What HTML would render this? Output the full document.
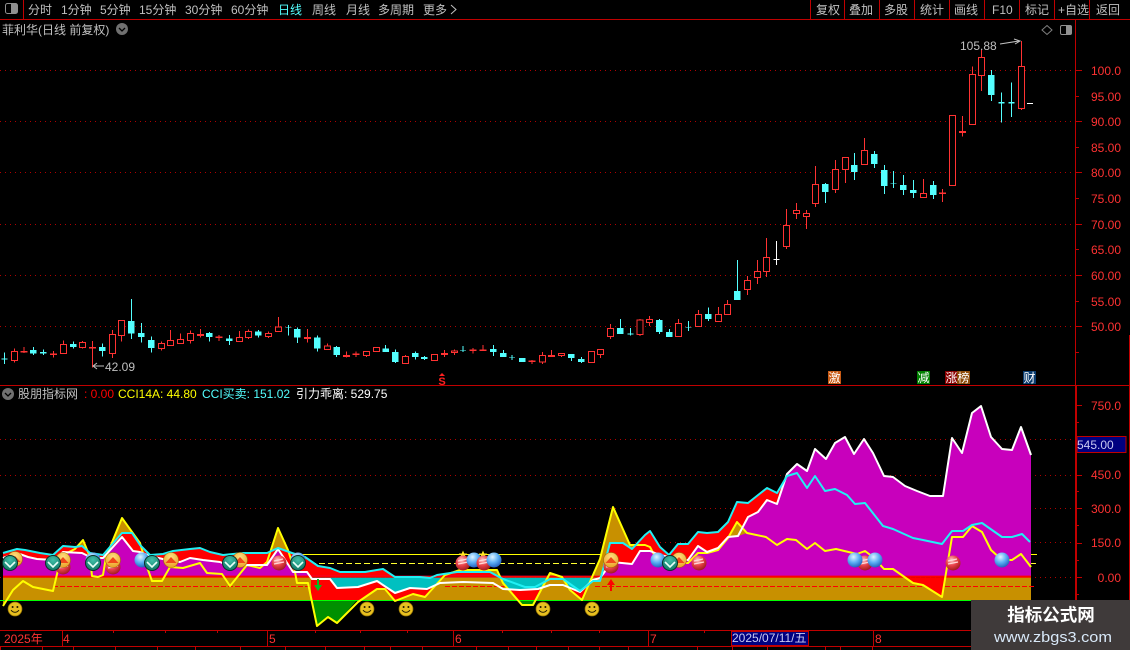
<!DOCTYPE html>
<html><head><meta charset="utf-8"><style>
html,body{margin:0;padding:0;background:#000;width:1130px;height:650px;overflow:hidden}
svg{display:block}
text{font-family:"Liberation Sans","WenQuanYi Zen Hei","Noto Sans CJK SC",sans-serif;font-size:12px}
.g{fill:#c0c0c0}.r{fill:#ff3232}
.z{shape-rendering:crispEdges;stroke-width:3}
.rw{stroke:#ff3232;fill:none}.rb{fill:#000;stroke:#ff3232}
.cw{stroke:#54ffff;fill:none}.cb{fill:#54ffff;stroke:none}
.ww{stroke:#fff;fill:none}
.ln{fill:none;stroke-width:2;stroke-linejoin:round}
.grid{stroke:#b00000;stroke-dasharray:1 4;fill:none}
.bd{stroke:#c00000;fill:none;shape-rendering:crispEdges}
</style></head><body>
<svg xmlns="http://www.w3.org/2000/svg" width="1130" height="650" viewBox="0 0 1130 650">
<defs>
<radialGradient id="gb" cx=".4" cy=".3" r=".75"><stop offset="0" stop-color="#e0f4ff"/><stop offset=".5" stop-color="#5cb0f4"/><stop offset="1" stop-color="#1c58b8"/></radialGradient>
<radialGradient id="gr" cx=".4" cy=".3" r=".75"><stop offset="0" stop-color="#ffc8c8"/><stop offset=".5" stop-color="#e84048"/><stop offset="1" stop-color="#981818"/></radialGradient>
<radialGradient id="gt" cx=".5" cy=".3" r=".8"><stop offset="0" stop-color="#40c0a8"/><stop offset="1" stop-color="#0c6c5c"/></radialGradient>
<radialGradient id="go" cx=".5" cy=".3" r=".8"><stop offset="0" stop-color="#ffe080"/><stop offset="1" stop-color="#e89818"/></radialGradient>
<g id="b"><circle r="7.5" fill="url(#gb)"/></g>
<g id="k"><circle r="7.5" fill="url(#gr)"/><path d="M-5 -2L4 -4M-5 1L5 -1" stroke="#ffd8d8" stroke-width="1.2" fill="none"/></g>
<g id="t"><circle r="7.5" fill="url(#gt)" stroke="#0a3028"/><path d="M-5 -1L0 4L5 -1" stroke="#e8fff8" stroke-width="1.6" fill="none"/></g>
<g id="o"><circle r="7.5" fill="url(#go)" stroke="#a06808" stroke-width=".6"/><path d="M-5.5 3L0 -3L5.5 3Z" fill="#f04818"/></g>
<g id="s"><circle r="7" fill="#e8c020" stroke="#907000" stroke-width=".7"/><circle cx="-2.4" cy="-2" r="1" fill="#201800"/><circle cx="2.4" cy="-2" r="1" fill="#201800"/><path d="M-4 1.2Q0 5.4 4 1.2" stroke="#201800" fill="none"/></g>
<clipPath id="up"><rect x="0" y="380" width="1130" height="195.7"/></clipPath>
<clipPath id="be"><rect x="0" y="577.7" width="1130" height="22.3"/></clipPath>
<clipPath id="lo"><rect x="0" y="577.7" width="1130" height="22.3"/></clipPath>
<clipPath id="dn"><rect x="0" y="600" width="1130" height="40"/></clipPath>
</defs>
<rect width="1130" height="650" fill="#000"/>

<!-- dotted grid -->
<path class="grid" d="M0 70.5H1075M0 121.5H1075M0 172.5H1075M0 224.5H1075M0 275.5H1075M0 326.5H1075M0 439.5H1075M0 475.5H1075M0 508.5H1075M0 542.5H1075M0 577.5H1075"/>

<!-- candles A -->
<g class="z" transform="translate(0,285) scale(.33333)">
<path class="rw" d="M43 190V232M72 186V204M160 198V217M190 166V206M248 168V190M278 168V247M337 135V219M365 106V170M484 170V197M512 135V182M541 145V177M571 136V175M601 132V158M657 150V168M718 138V171M745 134V162M805 140V159M835 96V141M922 132V172"/>
<path class="rb" d="M34 200h18v27h-18zM63 199h18v2h-18zM151 207h18v2h-18zM181 178h18v28h-18zM239 172h18v16h-18zM269 187h18v2h-18zM328 148h18v57h-18zM356 106h18v46h-18zM475 175h18v16h-18zM503 166h18v16h-18zM532 163h18v13h-18zM562 145h18v22h-18zM592 148h18v3h-18zM648 156h18v2h-18zM709 157h18v13h-18zM736 139h18v19h-18zM796 145h18v10h-18zM826 126h18v14h-18zM913 157h18v3h-18z"/>
<path class="cw" d="M13 202V237M100 186V210M130 193V210M220 170V190M307 175V215M394 42V162M424 114V172M454 155V203M628 141V170M688 150V180M775 135V158M865 120V152M892 128V174M952 152V200"/>
<path class="cb" d="M4 220h18v3h-18zM90 195h20v11h-20zM120 201h20v5h-20zM210 177h20v9h-20zM297 186h20v12h-20zM384 108h20v38h-20zM414 144h20v12h-20zM444 165h20v24h-20zM618 144h20v12h-20zM678 160h20v8h-20zM765 139h20v13h-20zM856 127h18v2h-18zM882 132h20v26h-20zM942 157h20v34h-20z"/>
</g>
<!-- candles B -->
<g class="z" transform="translate(300,300) scale(.33333)">
<path class="rw" d="M82 130V150M140 155V172M168 155V171M199 153V171M229 141V155M316 165V192M403 162V183M433 150V171M463 149V165M519 144V161M549 135V153M696 180V192M727 156V192M755 150V171M785 160V171M874 153V189M901 147V174M931 72V117"/>
<path class="rb" d="M73 138h18v11h-18zM131 166h18v4h-18zM159 162h18v2h-18zM190 154h18v13h-18zM220 142h18v13h-18zM307 169h18v22h-18zM394 163h18v19h-18zM424 160h18v4h-18zM454 153h18v4h-18zM510 150h18v2h-18zM540 150h18v2h-18zM687 183h18v2h-18zM718 166h18v20h-18zM746 166h18v4h-18zM776 160h18v6h-18zM865 154h18v34h-18zM892 148h18v16h-18zM922 85h18v25h-18z"/>
<path class="cw" d="M110 138V171M257 135V156M286 148V189M346 155V179M373 168V180M489 138V156M580 135V168M610 150V171M636 165V180M814 162V183M844 171V189M961 57V102M991 84V107"/>
<path class="cb" d="M100 141h20v24h-20zM247 145h20v11h-20zM276 156h20v30h-20zM336 159h20v12h-20zM363 171h20v6h-20zM480 150h18v2h-18zM570 147h20v9h-20zM600 159h20v12h-20zM627 171h18v2h-18zM657 174h20v12h-20zM804 162h20v12h-20zM834 177h20v9h-20zM951 84h20v18h-20zM982 100h18v4h-18z"/>
</g>
<!-- candles C -->
<g class="z" transform="translate(640,130) scale(.33333)">
<path class="rw" d="M0 567V618M28 558V588M115 567V621M175 540V590M235 531V575M262 510V554M322 438V495M352 390V462M379 324V441M439 237V357M469 219V267M499 240V297M526 108V231M586 90V189M616 82V159M673 24V105M850 147V204M907 177V216"/>
<path class="rb" d="M-9 570h18v44h-18zM19 569h18v9h-18zM106 580h18v40h-18zM166 553h18v37h-18zM226 553h18v22h-18zM253 523h18v31h-18zM313 451h18v28h-18zM343 424h18v19h-18zM370 382h18v43h-18zM430 286h18v64h-18zM460 241h18v9h-18zM490 250h18v10h-18zM517 163h18v58h-18zM577 118h18v61h-18zM607 82h18v37h-18zM664 61h18v43h-18zM841 190h18v13h-18zM898 189h18v2h-18z"/>
<path class="cw" d="M58 567V612M88 597V621M145 573V603M205 533V573M292 390V510M556 159V219M643 69V150M703 63V114M733 105V192M760 123V174M790 135V195M820 150V204M880 153V207"/>
<path class="cb" d="M48 570h20v36h-20zM78 606h20v15h-20zM136 591h18v2h-18zM195 552h20v15h-20zM282 483h20v27h-20zM546 162h20v24h-20zM633 105h20v21h-20zM693 72h20v30h-20zM723 120h20v48h-20zM751 159h18v2h-18zM780 165h20v15h-20zM810 180h20v9h-20zM870 165h20v30h-20z"/>
<path class="ww" d="M409 333V405M400 388H418"/>
</g>
<!-- candles D -->
<g class="z" transform="translate(935,40) scale(.33333)">
<path class="rw" d="M82 228V290M112 80V103M139 28V153M259 3V210"/>
<path class="rb" d="M43 226h18v211h-18zM73 274h18v3h-18zM103 103h18v151h-18zM130 52h18v55h-18zM250 79h18v127h-18z"/>
<path class="cw" d="M169 90V183M199 158V248M229 128V231"/>
<path class="cb" d="M159 105h20v60h-20zM190 186h18v5h-18zM220 186h18v5h-18z"/>
<path class="ww" d="M276 190H294"/>
</g>

<!-- price annotations -->
<text x="960" y="50" class="g">105.88</text>
<path d="M1000 44L1019 41M1014 39L1020 41L1015 44" stroke="#c0c0c0" fill="none"/>
<path d="M93 366H104M97 363L93 366L97 369" stroke="#c0c0c0" fill="none"/>
<text x="105" y="371" class="g">42.09</text>

<!-- markers -->
<path d="M442 373L445 376H439Z" fill="#ff2020"/>
<text x="442" y="385" text-anchor="middle" style="font-weight:bold;font-size:11px" fill="#ff2020">S</text>
<rect x="828" y="371" width="13" height="13" fill="#c85a14"/><text x="828.5" y="382" fill="#fff">激</text>
<rect x="917" y="371" width="13" height="13" fill="#008000"/><text x="917.5" y="382" fill="#fff">减</text>
<rect x="945" y="371" width="13" height="13" fill="#8a0000"/><text x="945.5" y="382" fill="#fff">涨</text>
<rect x="957" y="371" width="13" height="13" fill="#8c4a08"/><text x="957.5" y="382" fill="#fff">榜</text>
<rect x="1023" y="371" width="13" height="13" fill="#0a3c6e"/><text x="1023.5" y="382" fill="#fff">财</text>

<!-- indicator -->
<path d="M3 554.5H1037" stroke="#ffff00" fill="none" shape-rendering="crispEdges"/>
<path d="M310 563.5H1037" stroke="#ffff30" stroke-dasharray="6 3" fill="none" shape-rendering="crispEdges"/>
<!-- L1 gold -->
<polygon fill="#c89000" points="3,606 13,590 23,581 33,587 53,591 58,570 63,555 75,549 83,540 90,557 92,576 98,577 103,575 106,557 122,518 140,543 147,567 152,581 162,581 170,567 183,568 200,563 207,573 222,574 230,586 247,565 260,568 267,562 278,528 288,550 295,572 297,583 308,583 317,600 352,600 358,600 377,589 385,589 395,600 413,594 425,597 445,575 460,570 497,570 503,583 518,600 536,600 550,573 562,577 570,590 582,600 600,559 613,507 630,545 645,545 650,547 657,560 670,562 688,563 698,553 707,553 718,550 728,538 737,522 747,533 766,537 777,545 787,539 796,540 807,549 815,543 825,551 836,549 857,554 865,551 873,557 884,569 893,569 913,583 923,585 942,597 952,537 963,537 972,526 982,532 991,550 1002,560 1012,560 1021,554 1031,567 1031,600 3,600"/>
<!-- L2 red -->
<polygon fill="#ff0000" points="3,553 17,549 25,550 40,553 53,555 63,546 75,547 82,546 90,553 103,555 122,533 132,533 140,545 150,555 163,554 173,551 190,549 200,548 210,552 223,555 243,553 267,553 278,548 292,553 305,557 318,566 330,568 340,572 365,572 383,569 395,577 420,577 430,578 437,575 457,572 490,572 503,579 525,587 535,587 550,579 563,579 580,591 593,581 600,581 610,543 623,543 632,549 645,535 650,531 660,547 669,555 678,544 688,544 698,532 707,533 718,532 728,522 737,502 748,503 767,488 777,493 787,476 797,473 807,488 815,476 825,491 835,489 847,495 855,504 865,503 883,526 893,529 913,538 923,540 942,544 952,531 963,531 972,525 982,523 1002,537 1012,537 1022,534 1030,542 1030,577.7 3,577.7"/>
<rect x="3" y="575.7" width="1028" height="2" fill="#ff0000"/>
<!-- L3 magenta -->
<polygon clip-path="url(#up)" fill="#c800bc" points="3,558 17,553 28,557 37,559 53,560 63,552 82,553 92,558 103,558 122,537 133,551 140,552 150,556 167,560 180,562 190,558 203,560 220,562 227,565 233,560 247,565 267,565 278,549 293,572 307,572 312,579 330,579 337,588 358,587 377,581 395,593 410,588 427,589 440,583 463,582 493,583 503,589 520,590 538,589 550,585 563,585 580,592 593,580 600,578 612,562 632,564 640,551 650,551 660,555 669,557 678,560 688,560 698,546 707,552 718,548 728,537 738,536 748,517 758,512 767,500 777,504 787,474 797,464 807,471 815,449 826,459 835,443 845,437 854,454 864,439 873,453 884,476 893,477 905,486 917,491 930,496 943,496 952,438 962,453 972,413 981,406 991,437 1002,449 1012,450 1021,427 1031,455 1031,575.7 3,575.7"/>
<polygon fill="#c89000" points="728,538 737,522 747,533 738,536"/>
<!-- L4 teal -->
<polygon clip-path="url(#be)" fill="#00c0c0" points="3,558 17,553 28,557 37,559 53,560 63,552 82,553 92,558 103,558 122,537 133,551 140,552 150,556 167,560 180,562 190,558 203,560 220,562 227,565 233,560 247,565 267,565 278,549 293,572 307,572 312,579 330,579 337,588 358,587 377,581 395,593 410,588 427,589 440,583 463,582 493,583 503,589 520,590 538,589 550,585 563,585 580,592 593,580 600,578 612,562 632,564 640,551 650,551 660,555 669,557 678,560 688,560 698,546 707,552 718,548 728,537 738,536 748,517 758,512 767,500 777,504 787,474 797,464 807,471 815,449 826,459 835,443 845,437 854,454 864,439 873,453 884,476 893,477 905,486 917,491 930,496 943,496 952,438 962,453 972,413 981,406 991,437 1002,449 1012,450 1021,427 1031,455 1031,500 3,500"/>
<!-- L5 red -->
<polygon clip-path="url(#be)" fill="#ff0000" points="3,558 17,553 28,557 37,559 53,560 63,552 82,553 92,558 103,558 122,537 133,551 140,552 150,556 167,560 180,562 190,558 203,560 220,562 227,565 233,560 247,565 267,565 278,549 293,572 307,572 312,579 330,579 337,588 358,587 377,581 395,593 410,588 427,589 440,583 463,582 493,583 503,589 520,590 538,589 550,585 563,585 580,592 593,580 600,578 612,562 632,564 640,551 650,551 660,555 669,557 678,560 688,560 698,546 707,552 718,548 728,537 738,536 748,517 758,512 767,500 777,504 787,474 797,464 807,471 815,449 826,459 835,443 845,437 854,454 864,439 873,453 884,476 893,477 905,486 917,491 930,496 943,496 952,438 962,453 972,413 981,406 991,437 1002,449 1012,450 1021,427 1031,455 1031,640 3,640"/>
<!-- L6 gold under yellow -->
<polygon clip-path="url(#lo)" fill="#c89000" points="3,606 13,590 23,581 33,587 53,591 58,570 63,555 75,549 83,540 90,557 92,576 98,577 103,575 106,557 122,518 140,543 147,567 152,581 162,581 170,567 183,568 200,563 207,573 222,574 230,586 247,565 260,568 267,562 278,528 288,550 295,572 297,583 308,583 317,626 328,617 337,623 358,602 377,589 385,589 395,601 413,594 425,597 445,575 460,570 497,570 503,583 522,605 533,605 550,573 562,577 570,590 582,600 600,559 613,507 630,545 645,545 650,547 657,560 670,562 688,563 698,553 707,553 718,550 728,538 737,522 747,533 766,537 777,545 787,539 796,540 807,549 815,543 825,551 836,549 857,554 865,551 873,557 884,569 893,569 913,583 923,585 942,597 952,537 963,537 972,526 982,532 991,550 1002,560 1012,560 1021,554 1031,567 1031,640 3,640"/>
<rect x="3" y="577.7" width="308" height="22.3" fill="#c89000"/>
<!-- L7 green -->
<polygon fill="#009000" points="311,600 317,626 328,617 337,623 357,600"/>
<polygon fill="#009000" points="518,600 522,605 533,605 536,600"/>
<!-- dashes and zero line -->
<path d="M53 586.5H312M445 586.5H505M595 586.5H1036" stroke="#ff0000" stroke-dasharray="5 2" fill="none" shape-rendering="crispEdges"/>
<path d="M0 600.5H972" stroke="#00ff00" fill="none" shape-rendering="crispEdges"/>
<!-- lines -->
<polyline class="ln" stroke="#ffff00" points="3,606 13,590 23,581 33,587 53,591 58,570 63,555 75,549 83,540 90,557 92,576 98,577 103,575 106,557 122,518 140,543 147,567 152,581 162,581 170,567 183,568 200,563 207,573 222,574 230,586 247,565 260,568 267,562 278,528 288,550 295,572 297,583 308,583 317,626 328,617 337,623 358,602 377,589 385,589 395,601 413,594 425,597 445,575 460,570 497,570 503,583 522,605 533,605 550,573 562,577 570,590 582,600 600,559 613,507 630,545 645,545 650,547 657,560 670,562 688,563 698,553 707,553 718,550 728,538 737,522 747,533 766,537 777,545 787,539 796,540 807,549 815,543 825,551 836,549 857,554 865,551 873,557 884,569 893,569 913,583 923,585 942,597 952,537 963,537 972,526 982,532 991,550 1002,560 1012,560 1021,554 1031,567"/>
<polyline class="ln" stroke="#ffffff" points="3,558 17,553 28,557 37,559 53,560 63,552 82,553 92,558 103,558 122,537 133,551 140,552 150,556 167,560 180,562 190,558 203,560 220,562 227,565 233,560 247,565 267,565 278,549 293,572 307,572 312,579 330,579 337,588 358,587 377,581 395,593 410,588 427,589 440,583 463,582 493,583 503,589 520,590 538,589 550,585 563,585 580,592 593,580 600,578 612,562 632,564 640,551 650,551 660,555 669,557 678,560 688,560 698,546 707,552 718,548 728,537 738,536 748,517 758,512 767,500 777,504 787,474 797,464 807,471 815,449 826,459 835,443 845,437 854,454 864,439 873,453 884,476 893,477 905,486 917,491 930,496 943,496 952,438 962,453 972,413 981,406 991,437 1002,449 1012,450 1021,427 1031,455"/>
<polyline class="ln" stroke="#20f0f4" points="3,553 17,549 25,550 40,553 53,555 63,546 75,547 82,546 90,553 103,555 122,533 132,533 140,545 150,555 163,554 173,551 190,549 200,548 210,552 223,555 243,553 267,553 278,548 292,553 305,557 318,566 330,568 340,572 365,572 383,569 395,577 420,577 430,578 437,575 457,572 490,572 503,579 525,587 535,587 550,579 563,579 580,591 593,581 600,581 610,543 623,543 632,549 645,535 650,531 660,547 669,555 678,544 688,544 698,532 707,533 718,532 728,522 737,502 748,503 767,488 777,493 787,476 797,473 807,488 815,476 825,491 835,489 847,495 855,504 865,503 883,526 893,529 913,538 923,540 942,544 952,531 963,531 972,525 982,523 1002,537 1012,537 1022,534 1030,542"/>

<!-- icons -->
<use href="#o" x="15" y="559"/><use href="#t" x="10" y="563"/>
<use href="#k" x="63" y="567"/><use href="#o" x="63" y="560"/><use href="#t" x="53" y="563"/>
<use href="#b" x="93" y="560"/><use href="#t" x="93" y="563"/>
<use href="#k" x="113" y="567"/><use href="#o" x="113" y="560"/>
<use href="#b" x="142" y="560"/><use href="#t" x="152" y="563"/>
<use href="#o" x="171" y="560"/>
<use href="#o" x="240" y="560"/><use href="#t" x="230" y="563"/>
<use href="#k" x="279" y="563"/>
<use href="#b" x="298" y="560"/><use href="#t" x="298" y="563"/>
<path d="M463 550.5l1.3 3h3l-2.4 2 1 3-2.9-1.8-2.9 1.8 1-3-2.4-2h3zM483 550.5l1.3 3h3l-2.4 2 1 3-2.9-1.8-2.9 1.8 1-3-2.4-2h3z" fill="#ffe820"/>
<use href="#k" x="463" y="563"/><use href="#b" x="474" y="560"/><use href="#k" x="484" y="563"/><use href="#b" x="494" y="560"/>
<use href="#k" x="611" y="566"/><use href="#o" x="611" y="560"/>
<use href="#b" x="658" y="560"/><use href="#o" x="679" y="560"/><use href="#t" x="670" y="563"/><use href="#k" x="699" y="563"/>
<use href="#k" x="865" y="563"/><use href="#b" x="855" y="560"/><use href="#b" x="875" y="560"/>
<use href="#k" x="953" y="563"/><use href="#b" x="1002" y="560"/>
<use href="#s" x="15" y="609"/><use href="#s" x="367" y="609"/><use href="#s" x="406" y="609"/><use href="#s" x="543" y="609"/><use href="#s" x="592" y="609"/>
<path d="M317 579h2v6h3l-4 6-4-6h3z" fill="#00c020"/>
<path d="M610 591v-6h-3l4-6 4 6h-3v6z" fill="#ff0000"/>

<!-- frame lines -->
<path class="bd" d="M0 19.5H1130M0 385.5H1130M23.5 0V19M1075.5 19V650M1076.5 386V650M1129.5 335V650M0 630.5H972M0 646.5H972"/>
<path class="bd" d="M810.5 0V19M844.5 0V19M879.5 0V19M914.5 0V19M949.5 0V19M984.5 0V19M1019.5 0V19M1054.5 0V19M1089.5 0V19"/>
<path class="bd" d="M62.5 631V646M267.5 631V646M453.5 631V646M648.5 631V646M873.5 631V646M113.5 630V633M165.5 630V633M217.5 630V633M315.5 630V633M360.5 630V633M407.5 630V633M502.5 630V633M551.5 630V633M599.5 630V633M704.5 630V633"/>
<path class="bd" d="M42.5 646V650M73.5 646V650M115.5 646V650M157.5 646V650M195.5 646V650M240.5 646V650M285.5 646V650M325.5 646V650M364.5 646V650M390.5 646V650M422.5 646V650M476.5 646V650M508.5 646V650M536.5 646V650M568.5 646V650M599.5 646V650M628.5 646V650M697.5 646V650M732.5 646V650M767.5 646V650M825.5 646V650M840.5 646V650M872.5 646V650M0.5 646V650"/>
<!-- axis ticks -->
<path class="bd" d="M1076 70.5H1082M1076 96.5H1079M1076 121.5H1082M1076 147.5H1079M1076 172.5H1082M1076 198.5H1079M1076 224.5H1082M1076 249.5H1079M1076 275.5H1082M1076 301.5H1079M1076 326.5H1082M1076 352.5H1079M1077 405.5H1082M1077 422.5H1079M1077 475.5H1082M1077 491.5H1079M1077 508.5H1082M1077 525.5H1079M1077 543.5H1082M1077 560.5H1079M1077 577.5H1082M1077 594.5H1079"/>

<!-- axis labels -->
<g class="r" text-anchor="end">
<text x="1121" y="75">100.0</text><text x="1121" y="101">95.00</text><text x="1121" y="126">90.00</text><text x="1121" y="152">85.00</text><text x="1121" y="177">80.00</text><text x="1121" y="203">75.00</text><text x="1121" y="229">70.00</text><text x="1121" y="254">65.00</text><text x="1121" y="280">60.00</text><text x="1121" y="306">55.00</text><text x="1121" y="331">50.00</text>
<text x="1121" y="410">750.0</text><text x="1121" y="479">450.0</text><text x="1121" y="513">300.0</text><text x="1121" y="547">150.0</text><text x="1121" y="582">0.00</text>
</g>
<rect x="1077" y="436.5" width="49" height="16" fill="#000080" stroke="#c00000"/>
<text x="1077" y="449" fill="#c8c8f0">545.00</text>

<!-- toolbar -->
<rect x="5.5" y="3.5" width="12" height="10" rx="2" fill="none" stroke="#909090"/><rect x="11" y="4" width="6" height="9" fill="#909090"/>
<g class="g">
<text x="28" y="14">分时</text><text x="61" y="14">1分钟</text><text x="100" y="14">5分钟</text><text x="139" y="14">15分钟</text><text x="185" y="14">30分钟</text><text x="231" y="14">60分钟</text>
<text x="278" y="14" style="fill:#54ffff">日线</text>
<text x="312" y="14">周线</text><text x="346" y="14">月线</text><text x="378" y="14">多周期</text><text x="423" y="14">更多</text>
<text x="816" y="14">复权</text><text x="849" y="14">叠加</text><text x="884" y="14">多股</text><text x="920" y="14">统计</text><text x="954" y="14">画线</text><text x="992" y="14">F10</text><text x="1025" y="14">标记</text><text x="1058" y="14">+自选</text><text x="1096" y="14">返回</text>
<text x="2" y="34">菲利华(日线 前复权)</text>
<text x="18" y="398">股朋指标网</text>
</g>
<path d="M451 5L456 9.5L451 14" stroke="#c0c0c0" fill="none"/>
<circle cx="122" cy="29" r="6" fill="#707070"/><path d="M119 28L122 31L125 28" stroke="#000" stroke-width="1.3" fill="none"/>
<circle cx="8" cy="394" r="6" fill="#707070"/><path d="M5 393L8 396L11 393" stroke="#000" stroke-width="1.3" fill="none"/>
<path d="M1047 25.5L1052 30L1047 34.5L1042 30Z" stroke="#808080" fill="none"/>
<rect x="1060.5" y="25.5" width="11" height="9" rx="1.5" fill="none" stroke="#909090"/><rect x="1066" y="26" width="5" height="8" fill="#909090"/>

<!-- legend -->
<text x="84" y="398" fill="#ff0000">: 0.00</text>
<text x="118" y="398" fill="#ffff00">CCI14A: 44.80</text>
<text x="202" y="398" fill="#54ffff">CCI买卖: 151.02</text>
<text x="296" y="398" fill="#ffffff">引力乖离: 529.75</text>

<!-- time axis -->
<text x="4" y="643" class="r">2025年</text>
<g class="r"><text x="63" y="643">4</text><text x="269" y="643">5</text><text x="455" y="643">6</text><text x="650" y="643">7</text><text x="875" y="643">8</text></g>
<rect x="731.5" y="631.5" width="77" height="14" fill="#000080" stroke="#c00000"/>
<text x="732" y="642" fill="#c8c8f0">2025/07/11/五</text>

<!-- watermark -->
<rect x="971" y="600" width="159" height="50" fill="#3f3a3a"/>
<text x="1051" y="621" text-anchor="middle" style="font-size:17.5px;font-weight:bold" fill="#ffffff">指标公式网</text>
<text x="994" y="642" textLength="118" lengthAdjust="spacingAndGlyphs" style="font-size:15px" fill="#d8e8f8">www.zbgs3.com</text>
</svg>
</body></html>
